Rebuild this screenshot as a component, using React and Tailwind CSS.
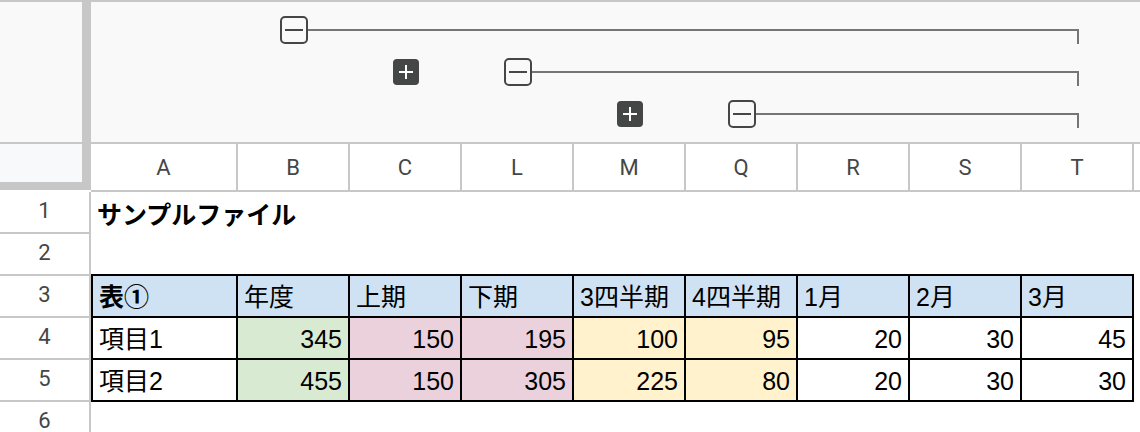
import React from "react";

const cols = ["A", "B", "C", "L", "M", "Q", "R", "S", "T"];

const headerRow = ["表①", "年度", "上期", "下期", "3四半期", "4四半期", "1月", "2月", "3月"];
const dataRows = [
  ["項目1", 345, 150, 195, 100, 95, 20, 30, 45],
  ["項目2", 455, 150, 305, 225, 80, 20, 30, 30],
];
const dataBg = [
  "bg-white",
  "bg-[#d9ead3]",
  "bg-[#ead1dc]",
  "bg-[#ead1dc]",
  "bg-[#fff2cc]",
  "bg-[#fff2cc]",
  "bg-white",
  "bg-white",
  "bg-white",
];

function MinusBox() {
  return (
    <div className="w-[28px] h-[28px] shrink-0 rounded-[5px] border-2 border-[#444746] flex items-center justify-center">
      <div className="w-[18px] h-[2px] bg-[#444746]" />
    </div>
  );
}

function PlusBox() {
  return (
    <div className="w-[26px] h-[26px] mt-px rounded-[4px] bg-[#444746] relative">
      <div className="absolute left-[6px] top-[12px] w-[14px] h-[2px] bg-white" />
      <div className="absolute left-[12px] top-[6px] w-[2px] h-[14px] bg-white" />
    </div>
  );
}

function Group({ className }) {
  return (
    <div className={`flex items-start pl-[42px] pr-[55px] ${className}`}>
      <MinusBox />
      <div className="flex-1 h-[15px] mt-[13px] border-t-2 border-r-2 border-[#757575]" />
    </div>
  );
}

function RowNum({ n }) {
  return (
    <div className="flex items-center justify-center pb-1 bg-white border-r-2 border-b-2 border-[#c7c7c7] text-[22px] text-[#444746] font-['Roboto',sans-serif]">
      {n}
    </div>
  );
}

function Cell({ children, className = "" }) {
  return (
    <div className={`flex items-end px-[6px] pb-[5px] leading-[28px] text-[25px] text-black whitespace-nowrap overflow-hidden ${className}`}>
      {children}
    </div>
  );
}

export default function App() {
  return (
    <div className="w-[1140px] h-[432px] overflow-hidden bg-white border-t-2 border-[#c7c7c7] font-['Liberation_Sans','Noto_Sans_CJK_JP',sans-serif]">
      {/* frozen top: grouping controls + column letters */}
      <div className="flex">
        <div className="w-[91px] h-[188px] shrink-0 border-r-[9px] border-b-[8px] border-[#c7c7c7] flex flex-col">
          <div className="h-[142px] bg-[#f9f9f9] border-b-2 border-[#c7c7c7]" />
          <div className="flex-1 bg-[#f8f9fa]" />
        </div>
        <div className="flex-1 flex flex-col">
          <div className="h-[142px] bg-[#f9f9f9] border-b-2 border-[#c7c7c7] pt-[14px] grid grid-cols-[147px_repeat(8,112px)_1fr] auto-rows-[42px]">
            <Group className="row-start-1 col-start-2 col-end-10" />
            <div className="row-start-2 col-start-3 flex justify-center">
              <PlusBox />
            </div>
            <Group className="row-start-2 col-start-4 col-end-10" />
            <div className="row-start-3 col-start-5 flex justify-center">
              <PlusBox />
            </div>
            <Group className="row-start-3 col-start-6 col-end-10" />
          </div>
          <div className="h-[48px] grid grid-cols-[147px_repeat(8,112px)_1fr] border-b-2 border-[#c7c7c7]">
            {cols.map((c) => (
              <div
                key={c}
                className="flex items-center justify-center border-r-2 border-[#c7c7c7] text-[22px] text-[#444746] font-['Roboto',sans-serif]"
              >
                {c}
              </div>
            ))}
            <div />
          </div>
        </div>
      </div>

      {/* sheet body */}
      <div className="grid grid-cols-[91px_147px_repeat(8,112px)_1fr] auto-rows-[42px]">
        <RowNum n={1} />
        <Cell className="col-span-3 font-bold">サンプルファイル</Cell>
        <div className="col-span-7" />

        <RowNum n={2} />
        {cols.map((c) => (
          <div key={c} className="border-b-2 border-black" />
        ))}
        <div />

        <RowNum n={3} />
        {headerRow.map((h, i) => (
          <Cell
            key={i}
            className={`bg-[#cfe2f3] border-r-2 border-b-2 border-black ${i === 0 ? "border-l-2 font-bold" : ""}`}
          >
            {h}
          </Cell>
        ))}
        <div />

        {dataRows.map((row, r) => (
          <React.Fragment key={r}>
            <RowNum n={4 + r} />
            {row.map((v, i) => (
              <Cell
                key={i}
                className={`${dataBg[i]} border-r-2 border-b-2 border-black ${i === 0 ? "border-l-2" : "justify-end"}`}
              >
                {v}
              </Cell>
            ))}
            <div />
          </React.Fragment>
        ))}

        <RowNum n={6} />
        <div className="col-span-10" />
      </div>
    </div>
  );
}
